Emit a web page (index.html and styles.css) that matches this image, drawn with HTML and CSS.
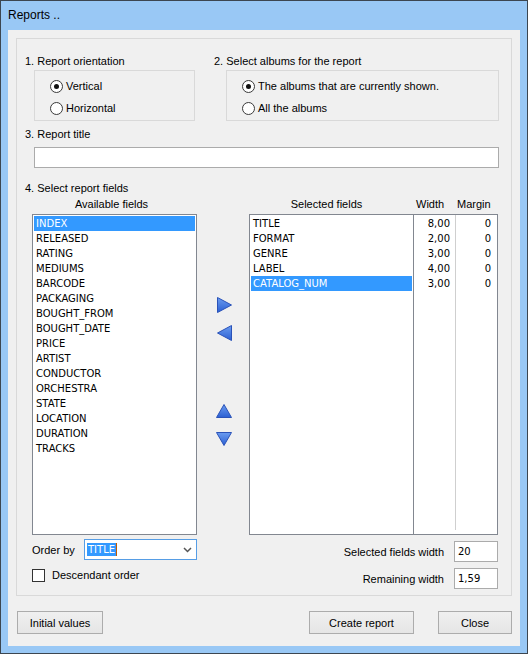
FILE: index.html
```html
<!DOCTYPE html>
<html>
<head>
<meta charset="utf-8">
<link rel="stylesheet" href="styles.css">
</head>
<body>
<div class="window">
  <div class="titlebar">Reports ..</div>
  <div class="client">
    <div class="panel">
      <div class="top-row">
        <div class="group g1">
          <div class="label">1. Report orientation</div>
          <div class="box">
            <div class="radio"><span class="rb checked"></span><span>Vertical</span></div>
            <div class="radio"><span class="rb"></span><span>Horizontal</span></div>
          </div>
        </div>
        <div class="group g2">
          <div class="label">2. Select albums for the report</div>
          <div class="box">
            <div class="radio"><span class="rb checked"></span><span>The albums that are currently shown.</span></div>
            <div class="radio"><span class="rb"></span><span>All the albums</span></div>
          </div>
        </div>
      </div>
      <div class="label sec3">3. Report title</div>
      <div class="title-input"></div>
      <div class="label sec4">4. Select report fields</div>
      <div class="fields">
        <div class="hdr hdr-avail">Available fields</div>
        <div></div>
        <div class="hdr hdr-sel">
          <span class="h-names">Selected fields</span>
          <span class="h-width">Width</span>
          <span class="h-margin">Margin</span>
        </div>
        <div class="list avail">
          <div class="item sel-item">INDEX</div>
          <div class="item">RELEASED</div>
          <div class="item">RATING</div>
          <div class="item">MEDIUMS</div>
          <div class="item">BARCODE</div>
          <div class="item">PACKAGING</div>
          <div class="item">BOUGHT_FROM</div>
          <div class="item">BOUGHT_DATE</div>
          <div class="item">PRICE</div>
          <div class="item">ARTIST</div>
          <div class="item">CONDUCTOR</div>
          <div class="item">ORCHESTRA</div>
          <div class="item">STATE</div>
          <div class="item">LOCATION</div>
          <div class="item">DURATION</div>
          <div class="item">TRACKS</div>
        </div>
        <div class="arrows">
          <svg class="arr a-right" width="15" height="16" viewBox="0 0 15 16"><defs><linearGradient id="g1" x1="0" y1="0" x2="0" y2="1"><stop offset="0" stop-color="#6b9cf0"/><stop offset="1" stop-color="#2b5fd2"/></linearGradient></defs><polygon points="0.5,0.5 14.5,8 0.5,15.5" fill="url(#g1)" stroke="#2a52b8" stroke-width="1"/></svg>
          <svg class="arr a-left" width="15" height="16" viewBox="0 0 15 16"><polygon points="14.5,0.5 0.5,8 14.5,15.5" fill="url(#g1)" stroke="#2a52b8" stroke-width="1"/></svg>
          <svg class="arr a-up" width="16" height="14" viewBox="0 0 16 14"><polygon points="8,0.5 15.5,13.5 0.5,13.5" fill="url(#g1)" stroke="#2a52b8" stroke-width="1"/></svg>
          <svg class="arr a-down" width="16" height="14" viewBox="0 0 16 14"><polygon points="0.5,0.5 15.5,0.5 8,13.5" fill="url(#g1)" stroke="#2a52b8" stroke-width="1"/></svg>
        </div>
        <div class="selbox">
          <div class="names">
            <div class="item">TITLE</div>
            <div class="item">FORMAT</div>
            <div class="item">GENRE</div>
            <div class="item">LABEL</div>
            <div class="item sel-item">CATALOG_NUM</div>
          </div>
          <div class="wcol">
            <div class="item">8,00</div>
            <div class="item">2,00</div>
            <div class="item">3,00</div>
            <div class="item">4,00</div>
            <div class="item">3,00</div>
          </div>
          <div class="sep"></div>
          <div class="mcol">
            <div class="item">0</div>
            <div class="item">0</div>
            <div class="item">0</div>
            <div class="item">0</div>
            <div class="item">0</div>
          </div>
        </div>
      </div>
      <div class="bottom">
        <div class="bleft">
          <div class="order-row">
            <span class="order-label">Order by</span>
            <div class="combo"><span class="combo-text">TITLE</span><span class="caret"></span>
              <svg class="chev" width="9" height="6" viewBox="0 0 9 6"><polyline points="1,1 4.5,4.5 8,1" fill="none" stroke="#555" stroke-width="1.5"/></svg>
            </div>
          </div>
          <div class="check-row"><span class="cb"></span><span>Descendant order</span></div>
        </div>
        <div class="bright">
          <div class="num-row"><span>Selected fields width</span><div class="num">20</div></div>
          <div class="num-row"><span>Remaining width</span><div class="num">1,59</div></div>
        </div>
      </div>
    </div>
    <div class="buttons">
      <div class="btn b-init">Initial values</div>
      <div class="btn b-create">Create report</div>
      <div class="btn b-close">Close</div>
    </div>
  </div>
</div>
</body>
</html>
```
FILE: styles.css
```css
* { box-sizing: border-box; }
body { margin: 0; font-family: "Liberation Sans", Arial, sans-serif; font-size: 11px; color: #000; }
.window { width: 528px; height: 654px; border: 1px solid #3c4650; background: #99c8f5; display: flex; flex-direction: column; }
.titlebar { height: 29px; line-height: 29px; padding-left: 7px; font-size: 12px; color: #000; }
.client { margin: 0 7px; height: 616px; background: #f0f0f0; padding: 8px 8px 12px 8px; display: flex; flex-direction: column; }
.panel { height: 558px; border: 1px solid #d9d9d9; padding: 15px 0 0 8px; display: flex; flex-direction: column; }
.label { height: 15px; line-height: 15px; white-space: nowrap; }
.top-row { display: flex; }
.g1 { width: 189px; }
.box { margin-top: 1px; height: 51px; border: 1px solid #d9d9d9; padding: 4px 0 0 15px; }
.g1 .box { margin-left: 9px; width: 161px; }
.g2 .box { margin-left: 12px; width: 273px; }
.radio { display: flex; align-items: center; height: 22px; gap: 3px; white-space: nowrap; }
.rb { width: 13px; height: 13px; border: 1px solid #3a3a3a; border-radius: 50%; background: #fff; display: flex; align-items: center; justify-content: center; flex: none; }
.rb.checked::after { content: ""; width: 5px; height: 5px; border-radius: 50%; background: #111; }
.sec3 { margin-top: 6px; }
.title-input { margin: 5px 0 0 9px; width: 465px; height: 21px; border: 1px solid #ababab; background: #fff; }
.sec4 { margin-top: 13px; }
.fields { margin-left: 7px; display: grid; grid-template-columns: 165px 52px 249px; grid-template-rows: 18px 321px; }
.hdr { line-height: 16px; white-space: nowrap; }
.hdr-avail { text-align: center; padding-right: 6px; }
.hdr-sel { display: flex; }
.h-names { width: 165px; text-align: center; padding-right: 10px; }
.h-width { width: 41px; padding-left: 2px; }
.h-margin { padding-left: 2px; }
.list, .names, .wcol, .mcol { font-family: "DejaVu Sans", sans-serif; font-size: 10px; }
.item { height: 15px; line-height: 15px; padding-left: 2px; white-space: nowrap; }
.sel-item { background: #3399ff; color: #fff; }
.list { border: 1px solid #828790; background: #fff; padding: 1px; }
.arrows { display: flex; flex-direction: column; padding-left: 20px; }
.arr { display: block; }
.a-right { margin-top: 83px; }
.a-left { margin-top: 12px; }
.a-up { margin-top: 63px; margin-left: -1px; }
.a-down { margin-top: 14px; margin-left: -1px; }
.selbox { display: flex; border: 1px solid #828790; background: #fff; }
.names { width: 164px; border-right: 1px solid #828790; padding: 1px; }
.wcol { width: 41px; padding: 1px 5px 0 0; text-align: right; }
.mcol { width: 41px; padding: 1px 6px 0 0; text-align: right; }
.sep { width: 1px; background: #cfcfcf; margin: 0 0 4px 0; }
.bottom { display: flex; justify-content: space-between; margin-top: 4px; }
.bleft { margin-left: 7px; }
.order-row { display: flex; align-items: center; height: 21px; }
.order-label { width: 52px; }
.combo { position: relative; width: 113px; height: 21px; border: 1px solid #569de5; background: #fff; display: flex; align-items: center; padding-left: 2px; font-family: "DejaVu Sans", sans-serif; font-size: 10px; }
.combo-text { background: #3399ff; color: #fff; line-height: 13px; padding: 0 1px; }
.caret { width: 1px; height: 13px; background: #c05a00; }
.chev { position: absolute; right: 4px; top: 7px; }
.check-row { display: flex; align-items: center; margin-top: 8px; height: 14px; gap: 7px; }
.cb { width: 13px; height: 13px; border: 1px solid #333; background: #fff; flex: none; }
.bright { margin-right: 13px; padding-top: 2px; display: flex; flex-direction: column; gap: 6px; align-items: flex-end; }
.num-row { display: flex; align-items: center; gap: 10px; }
.num { width: 44px; height: 21px; border: 1px solid #ababab; background: #fff; font-family: "DejaVu Sans", sans-serif; font-size: 10px; line-height: 19px; padding-left: 3px; }
.buttons { display: flex; margin-top: 15px; padding-left: 1px; }
.btn { height: 23px; border: 1px solid #acacac; background: linear-gradient(#f0f0f0, #e5e5e5); display: flex; align-items: center; justify-content: center; }
.b-init { width: 86px; }
.b-create { width: 105px; margin-left: auto; }
.b-close { width: 74px; margin-left: 24px; }
```
